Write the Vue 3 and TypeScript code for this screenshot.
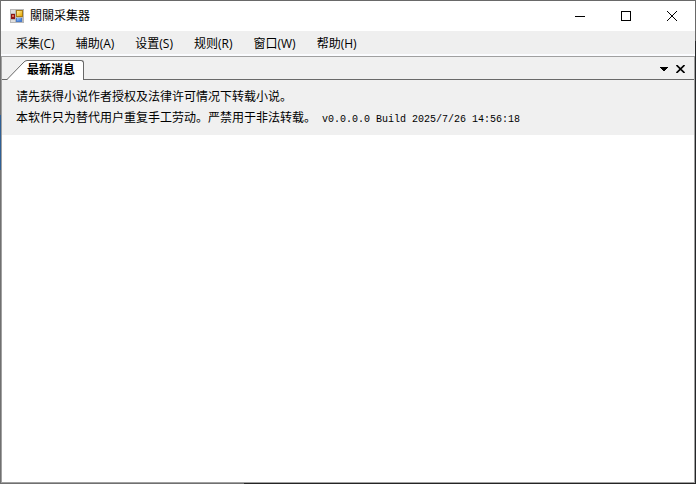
<script setup lang="ts">
interface MenuEntry {
  label: string
  key: string
}

const title = '關關采集器'
const menus: MenuEntry[] = [
  { label: '采集', key: 'C' },
  { label: '辅助', key: 'A' },
  { label: '设置', key: 'S' },
  { label: '规则', key: 'R' },
  { label: '窗口', key: 'W' },
  { label: '帮助', key: 'H' },
]
const notice = '请先获得小说作者授权及法律许可情况下转载小说。'
const terms = '本软件只为替代用户重复手工劳动。严禁用于非法转载。'
const build = 'v0.0.0.0 Build 2025/7/26 14:56:18'
</script>

<template>
  <div class="window">
    <header class="titlebar">
      <svg class="app-icon" width="14" height="14" viewBox="0 0 14 14" shape-rendering="crispEdges" aria-hidden="true">
        <defs>
          <linearGradient id="gold" x1="0" y1="0" x2="1" y2="1">
            <stop offset="0" stop-color="#fff0a0" />
            <stop offset="1" stop-color="#e8a800" />
          </linearGradient>
          <linearGradient id="blue" x1="0" y1="0" x2="1" y2="1">
            <stop offset="0" stop-color="#9cc4f8" />
            <stop offset="1" stop-color="#3a78dc" />
          </linearGradient>
        </defs>
        <rect width="14" height="14" fill="#b8b8b8" />
        <rect x="1" y="1" width="4" height="3" fill="#dedede" />
        <rect x="1" y="11" width="4" height="2" fill="#dedede" />
        <rect x="6" y="1" width="7" height="7" fill="#a87a14" />
        <rect x="7" y="2" width="5" height="5" fill="url(#gold)" />
        <rect x="1" y="5" width="4" height="5" fill="#8c1414" />
        <rect x="2" y="6" width="2" height="2" fill="#e07058" />
        <rect x="6" y="9" width="6" height="4" fill="#4c7cc8" />
        <rect x="7" y="9" width="4" height="3" fill="url(#blue)" />
      </svg>
      <h1 class="title">{{ title }}</h1>
      <div class="captions">
        <button type="button" aria-label="最小化">
          <svg width="10" height="10" viewBox="0 0 10 10" shape-rendering="crispEdges"><path d="M0 5.5H10" stroke="#000" /></svg>
        </button>
        <button type="button" aria-label="最大化">
          <svg width="10" height="10" viewBox="0 0 10 10" shape-rendering="crispEdges"><rect x=".5" y=".5" width="9" height="9" fill="none" stroke="#000" /></svg>
        </button>
        <button type="button" aria-label="关闭">
          <svg width="10" height="10" viewBox="0 0 10 10"><path d="M0 0L10 10M10 0L0 10" stroke="#000" /></svg>
        </button>
      </div>
    </header>

    <nav class="menubar">
      <button v-for="m in menus" :key="m.key" type="button">{{ m.label }}({{ m.key }})</button>
    </nav>

    <main class="dock">
      <div class="tabstrip">
        <button type="button" class="tab">
          <svg class="tab-slope" width="20" height="20" viewBox="0 0 20 20">
            <path d="M0 20L16 3Q18 .5 20 .5V20Z" fill="#fff" />
            <path d="M0 19.5L16 3Q18 .5 20 .5" fill="none" stroke="#696969" />
          </svg>
          <span class="tab-label">最新消息</span>
        </button>
        <div class="tab-tools">
          <button type="button" aria-label="窗口列表">
            <svg width="8" height="4" viewBox="0 0 8 4" shape-rendering="crispEdges"><path d="M0 0H8V1H7V2H6V3H5V4H3V3H2V2H1V1H0Z" /></svg>
          </button>
          <button type="button" aria-label="关闭标签">
            <svg width="9" height="8" viewBox="0 0 9 8"><path d="M.5 0L8.500 8M8.500 0L.5 8" stroke="#000" stroke-width="1.600" /></svg>
          </button>
        </div>
      </div>
      <section class="notice">
        <p>{{ notice }}</p>
        <p>{{ terms }}<span class="build">{{ build }}</span></p>
      </section>
      <div class="page"></div>
    </main>
  </div>
</template>

<style>
body {
  background: #fff;
}
</style>

<style scoped>
.window {
  box-sizing: border-box;
  display: flex;
  flex-direction: column;
  min-height: 100vh;
  padding: 1px;
  background:
    linear-gradient(90deg, #707070 35%, #242424 35%) bottom / 100% 1px no-repeat,
    linear-gradient(#707070 115px, #2f5f94 115px, #2f5f94 170px, #707070 170px) left / 1px 100% no-repeat,
    linear-gradient(#696969 41px, #242628 41px) right / 1px 100% no-repeat,
    #696969;
  font: 12px/16px "Open Sans", "Noto Sans CJK SC", sans-serif;
  color: #000;
}

button {
  margin: 0;
  padding: 0;
  border: 0;
  background: none;
  font: inherit;
  color: inherit;
}

svg {
  display: block;
}

.titlebar {
  display: flex;
  align-items: center;
  height: 30px;
  padding-left: 9px;
  background: #fff;
}

.title {
  flex: 1;
  margin: 0 0 0 6px;
  font-size: 12px;
  font-weight: 400;
}

.captions {
  display: flex;
  align-self: stretch;
}

.captions button {
  display: flex;
  align-items: center;
  justify-content: center;
  width: 46px;
}

.menubar {
  box-sizing: border-box;
  display: flex;
  gap: 21px;
  height: 25px;
  padding: 2px 15px 0;
  border-bottom: 2px solid #fbfcff;
  background: #efefef;
}

.dock {
  display: flex;
  flex: 1;
  flex-direction: column;
  border: 1px solid #a0a0a0;
  background: #fff;
}

.tabstrip {
  display: flex;
  align-items: flex-end;
  justify-content: space-between;
  height: 23px;
  background: linear-gradient(#696969, #696969) bottom / 100% 1px no-repeat #f0f0f0;
}

.tab {
  display: flex;
  margin-left: 5px;
  font-weight: 700;
}

.tab-label {
  box-sizing: border-box;
  height: 20px;
  padding-right: 8px;
  border: solid #696969;
  border-width: 1px 1px 0 0;
  border-top-right-radius: 3px;
  background: #fff;
  line-height: 18px;
}

.tab-tools {
  display: flex;
  align-items: center;
  align-self: stretch;
  gap: 8px;
  padding-right: 9px;
}

.notice {
  padding: 5px 14px 8px;
  background: #f0f0f0;
  font-family: "Noto Sans CJK SC", sans-serif;
  line-height: 21px;
}

.notice p {
  margin: 0;
}

.build {
  margin-left: 6px;
  font-family: "Liberation Mono", monospace;
  font-size: 10px;
  line-height: 10px;
}

.page {
  flex: 1;
}
</style>
